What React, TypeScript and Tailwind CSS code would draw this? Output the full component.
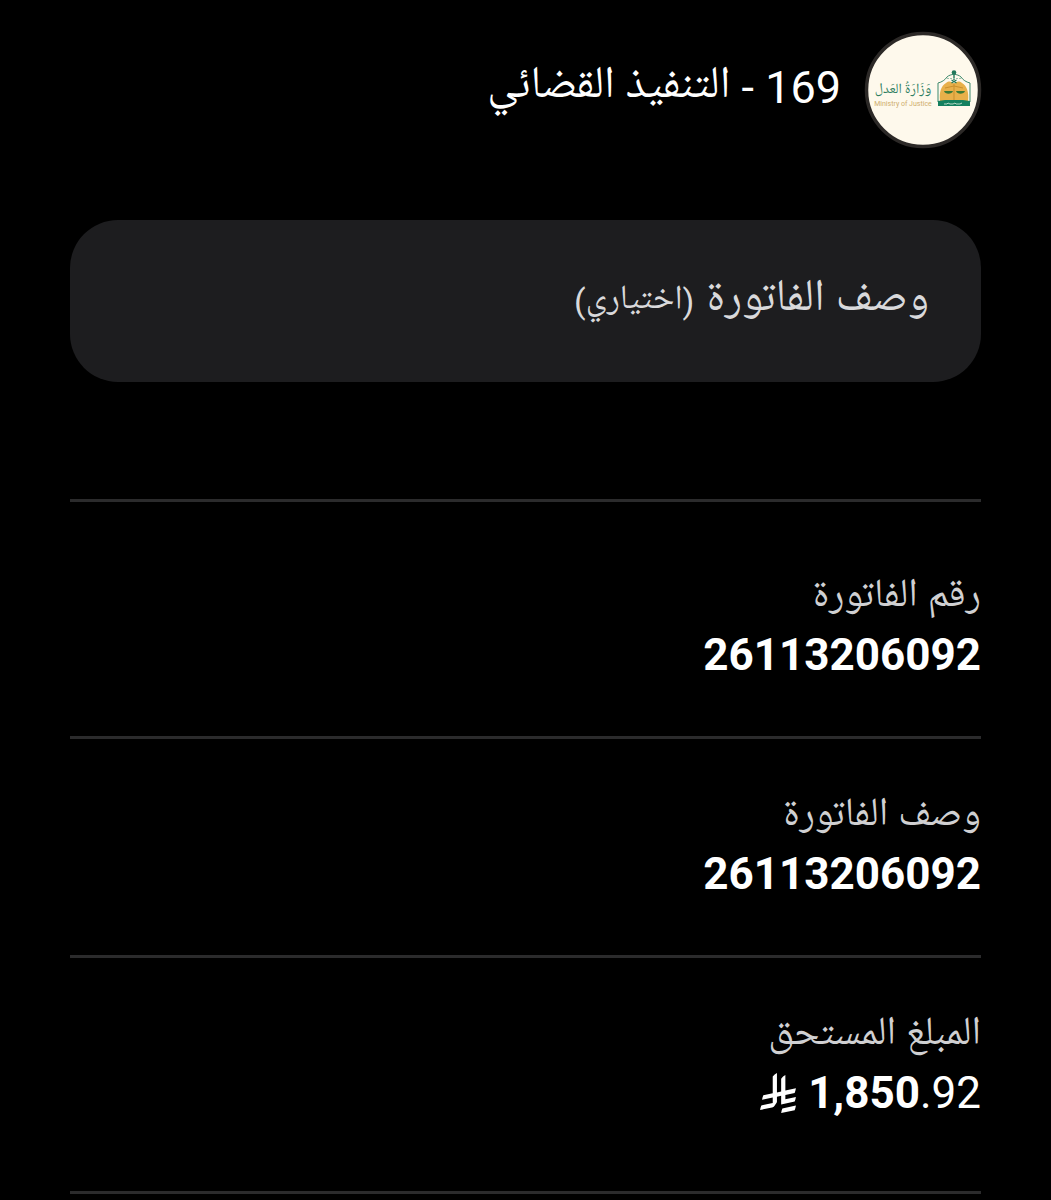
import React from "react";

const bills = [
  { label: "رقم الفاتورة", value: "26113206092", spacing: "pt-[66px] pb-[54px]" },
  { label: "وصف الفاتورة", value: "26113206092", spacing: "pt-12 pb-[54px]" },
];

const MinistryLogo = () => {
  return (
    <svg viewBox="0 0 124 124" className="size-[124px]" role="img" aria-label="Ministry of Justice">
      <circle cx="62" cy="62" r="56.5" fill="#fef9ec" stroke="#2c2927" strokeWidth="3.5" />
      <text
        x="42"
        y="65"
        fontSize="14"
        textAnchor="middle"
        fill="#2f7f62"
        fontFamily="'Noto Naskh Arabic', 'DejaVu Sans', sans-serif"
      >
        وَزَارَةُ العَدل
      </text>
      <text
        x="42"
        y="78"
        fontSize="7"
        textAnchor="middle"
        fill="#cfae6c"
        fontFamily="Roboto, sans-serif"
      >
        Ministry of Justice
      </text>
      <path d="M77 74V55c4-1 7-3 9-6 2-2 4-2 7-3 3 1 5 1 7 3 2 3 5 5 9 6v19z" fill="#fef9ec" stroke="#3f8a6d" strokeWidth="1" />
      <path d="M79 73c-1-9 1-15 6-18 3-2 5-2 8 1 3-3 5-3 8-1 5 3 7 9 6 18z" fill="#e8b04a" />
      <path d="M93 45v7" stroke="#20785a" strokeWidth="1.4" />
      <circle cx="93" cy="44.5" r="2.3" fill="#20785a" />
      <path d="M86 50.5h14" stroke="#9cc3ae" strokeWidth="1.2" strokeDasharray="2 1" />
      <path d="M90.5 55l5-3M95.5 55l-5-3" stroke="#20785a" strokeWidth="1.2" fill="none" />
      <path d="M93 55v17M84 60l9-2 9 2" stroke="#c98f2c" strokeWidth="1" fill="none" />
      <path d="M83 63h9c-1 3.5-8 3.5-9 0zM95 63h9c-1 3.5-8 3.5-9 0z" fill="#3d7a35" />
      <path d="M77 73l7-1h18l7 1v5H77z" fill="#14805f" />
      <path d="M83 76h3l1-1 2 1h3l2-1 1 1h4l2-1" stroke="#b5d8c6" strokeWidth="1" fill="none" />
    </svg>
  );
};

const RiyalIcon = () => {
  return (
    <svg viewBox="0 0 1124.14 1256.39" className="h-10 w-9 fill-current" role="img" aria-label="ريال">
      <path d="M699.62,1113.02h0c-20.06,44.48-33.32,92.75-38.4,143.37l424.51-90.24c20.06-44.47,33.31-92.75,38.4-143.37l-424.51,90.24Z" />
      <path d="M1085.73,895.8c20.06-44.47,33.32-92.75,38.4-143.37l-330.68,70.33v-135.2l292.27-62.11c20.06-44.47,33.32-92.75,38.4-143.37l-330.68,70.27V66.13c-50.67,28.45-95.67,66.32-132.25,110.99v403.35l-132.25,28.11V0c-50.67,28.44-95.67,66.32-132.25,110.99v525.69l-295.91,62.88c-20.06,44.47-33.33,92.75-38.42,143.37l334.33-71.05v170.26l-358.3,76.14c-20.06,44.47-33.32,92.75-38.4,143.37l375.04-79.7c30.53-6.35,56.77-24.4,73.83-49.24l68.78-101.97v-.02c7.14-10.55,11.3-23.27,11.3-36.97v-149.98l132.25-28.11v270.4l424.53-90.28Z" />
    </svg>
  );
};

const App = () => {
  return (
    <main
      dir="rtl"
      className="min-h-screen bg-black px-[70px] pt-7 font-[Roboto,'Noto_Naskh_Arabic_UI','Noto_Naskh_Arabic','DejaVu_Sans',sans-serif] text-white"
    >
      <header className="-ms-1 flex items-center gap-5">
        <MinistryLogo />
        <h1 className="pb-1 text-[45px] leading-[60px]">169 - التنفيذ القضائي</h1>
      </header>

      <div className="relative mt-[68px]">
        <input
          id="bill-note"
          type="text"
          placeholder=" "
          className="peer block h-[162px] w-full rounded-[48px] bg-[#1d1d1f] px-[52px] text-[40px] outline-none"
        />
        <label
          htmlFor="bill-note"
          className="absolute inset-y-0 start-[52px] flex items-center gap-3 text-[45px] text-[#d9d9db] peer-[:not(:placeholder-shown)]:hidden"
        >
          وصف الفاتورة <span className="text-[34px]">(اختياري)</span>
        </label>
      </div>

      <dl className="mt-[117px] border-b-3 border-[#2b2b2c]">
        {bills.map((bill) => (
          <div key={bill.label} className={`border-t-3 border-[#2b2b2c] ${bill.spacing}`}>
            <dt className="text-[40px] leading-[60px] text-[#d0d0d2]">{bill.label}</dt>
            <dd className="text-[44px] leading-[54px] font-bold">{bill.value}</dd>
          </div>
        ))}
        <div className="border-t-3 border-[#2b2b2c] pt-12 pb-[71px]">
          <dt className="text-[40px] leading-[60px] text-[#d0d0d2]">المبلغ المستحق</dt>
          <dd className="flex items-center gap-3 text-[44px] leading-[54px]">
            <span dir="ltr">
              <b>1,850</b>.92
            </span>
            <RiyalIcon />
          </dd>
        </div>
      </dl>
    </main>
  );
};

export default App;
